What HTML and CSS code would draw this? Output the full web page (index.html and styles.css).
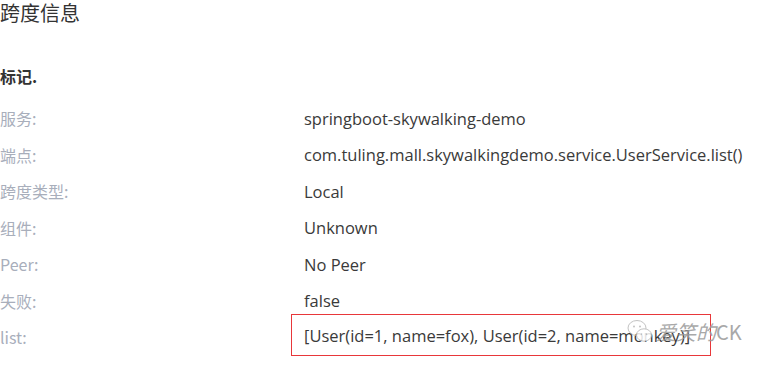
FILE: index.html
```html
<!DOCTYPE html>
<html lang="zh">
<head>
<meta charset="utf-8">
<link rel="stylesheet" href="styles.css">
</head>
<body>
<div class="page">
  <h3 class="title">跨度信息</h3>
  <h5 class="subtitle">标记.</h5>
  <div class="rows">
    <div class="row"><span class="label">服务:</span><span class="value">springboot-skywalking-demo</span></div>
    <div class="row"><span class="label">端点:</span><span class="value">com.tuling.mall.skywalkingdemo.service.UserService.list()</span></div>
    <div class="row"><span class="label">跨度类型:</span><span class="value">Local</span></div>
    <div class="row"><span class="label">组件:</span><span class="value">Unknown</span></div>
    <div class="row"><span class="label">Peer:</span><span class="value">No Peer</span></div>
    <div class="row"><span class="label">失败:</span><span class="value">false</span></div>
    <div class="row"><span class="label">list:</span><span class="value boxed">[User(id=1, name=fox), User(id=2, name=monkey)]</span></div>
  </div>
  <div class="watermark">
    <svg class="wm-icon" width="28" height="28" viewBox="0 0 28 28" fill="none" stroke="#b9b9b9" stroke-width="1">
      <ellipse cx="11" cy="10" rx="9" ry="7.5"/>
      <ellipse cx="18" cy="17" rx="7.5" ry="6.2" fill="#fff"/>
      <circle cx="8" cy="8.5" r="1" fill="#b9b9b9" stroke="none"/>
      <circle cx="14" cy="8.5" r="1" fill="#b9b9b9" stroke="none"/>
      <circle cx="15.5" cy="16" r="0.8" fill="#b9b9b9" stroke="none"/>
      <circle cx="20.5" cy="16" r="0.8" fill="#b9b9b9" stroke="none"/>
    </svg>
    <span class="wm-text"><i>爱笑的</i>CK</span>
  </div>
</div>
</body>
</html>
```
FILE: styles.css
```css
html, body {
  margin: 0;
  padding: 0;
  background: #fff;
}
.page {
  position: relative;
  height: 367px;
  overflow: hidden;
  font-family: "Open Sans", "Noto Sans CJK SC", sans-serif;
  color: #3a3a3a;
}
.title {
  margin: 0;
  font-size: 20px;
  font-weight: normal;
  line-height: 26px;
  color: #333;
  font-family: "Noto Sans CJK SC", sans-serif;
}
.subtitle {
  margin: 38px 0 0 0;
  font-size: 16px;
  line-height: 24px;
  font-weight: bold;
  color: #333;
  font-family: "Noto Sans CJK SC", sans-serif;
}
.rows {
  margin-top: 12px;
  display: flex;
  flex-direction: column;
}
.row {
  display: flex;
  align-items: center;
  height: 36.5px;
  font-size: 16.5px;
}
.label {
  width: 304px;
  flex: none;
  color: #a8aebb;
  font-size: 16px;
  font-family: "Noto Sans CJK SC", sans-serif;
}
.value {
  color: #3a3a3a;
  white-space: nowrap;
}
.boxed {
  border: 1px solid #e8373a;
  margin-left: -13px;
  margin-top: -4px;
  padding: 10px 20px 8px 12px;
  line-height: 22px;
}
.watermark {
  position: absolute;
  left: 626px;
  top: 317px;
  display: flex;
  align-items: center;
  gap: 2px;
  opacity: 0.85;
}
.wm-text {
  font-family: "Noto Sans CJK SC", sans-serif;
  font-size: 20px;
  color: #9a9a9a;
}
```
